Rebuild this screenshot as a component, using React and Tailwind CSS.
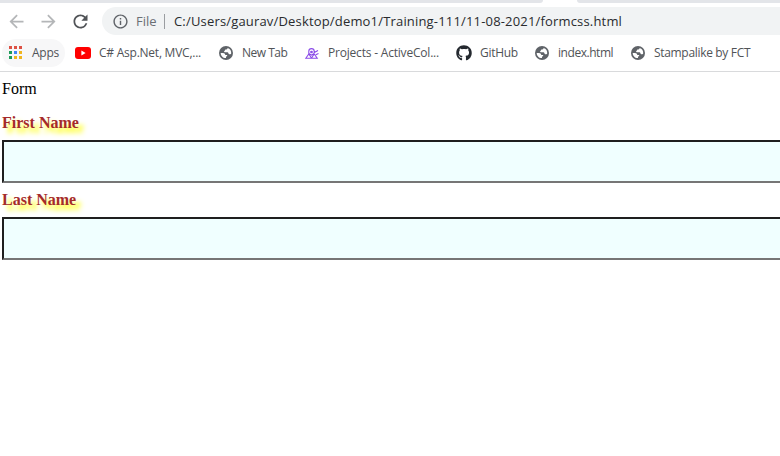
import { MdArrowBack, MdArrowForward, MdRefresh, MdInfoOutline } from "react-icons/md";
import { FaGithub } from "react-icons/fa";

function AppsIcon() {
  const colors = ["#dd5144", "#dd5144", "#dd5144", "#1e9c5a", "#4285f4", "#f0b51e", "#1e9c5a", "#f0b51e", "#f0b51e"];
  return (
    <svg className="mb-px" width="13" height="13" viewBox="0 0 13 13">
      {colors.map((c, i) => (
        <rect key={i} x={(i % 3) * 5} y={Math.floor(i / 3) * 5} width="3" height="3" fill={c} />
      ))}
    </svg>
  );
}

function YouTubeIcon() {
  return (
    <svg width="16" height="12" viewBox="0 0 16 12">
      <rect width="16" height="12" rx="3" fill="#f00" />
      <path d="M6.4 3.6v4.8l4.2-2.4z" fill="#fff" />
    </svg>
  );
}

function GlobeIcon() {
  return (
    <svg className="ml-px" width="14" height="14" viewBox="0 0 14 14">
      <circle cx="7" cy="7" r="7" fill="#5f6368" />
      <path
        d="M8.500 2c.2.800-.4 1.400-1.200 1.400h-.8c-.3 0-.5.300-.5.700 0 .7-.4 1.100-1 1.200-.2.600.2.900.8.900h2.300c.9 0 1.400.6 1.400 1.300 0 .4.300.7.7.7h1.100c.5 0 .7-.2.900-.6A5.400 5.400 0 0 0 8.500 2z"
        fill="#fff"
      />
      <path
        d="M1.700 6.900h2.300c1.400 0 2.200.8 2.300 2h1.300c.5 0 .8.400.6.900-.2.500-.6.800-1.200.9v1.200C4.200 12.200 1.700 10 1.700 6.900z"
        fill="#fff"
      />
    </svg>
  );
}

function ProjectsIcon() {
  return (
    <svg className="ml-px" width="14" height="11" viewBox="0 0 14 11" fill="none" stroke="#8a4be8" strokeWidth="1.1">
      <path d="M3.800 6.500V3.300a2.700 2.700 0 0 1 5.400 0v1.200L13 2.600M.8 10.200l3-4.200 2.700 4 2.700-4 3 4.200zM4 5.500l2.500 1.700L9 5.500M10.800 6.800l2.700-1.300" />
      <circle cx="6.500" cy="4" r=".8" fill="#8a4be8" />
    </svg>
  );
}

function Bookmark({ className, textClass, icon, children }) {
  return (
    <div className={`flex h-full shrink-0 items-center ${className}`}>
      <span className="flex w-6 shrink-0 items-center">{icon}</span>
      <span className={`whitespace-nowrap ${textClass}`}>{children}</span>
    </div>
  );
}

function Field({ label }) {
  return (
    <label className="block h-[77px]">
      <span className="block h-[27px] pt-px text-base leading-[18px] font-bold text-[#a52a2a] [text-shadow:5px_5px_5px_yellow]">
        {label}
      </span>
      <input className="block h-[43px] w-[800px] border-2 border-t-[#1f1f1f] border-r-[#767676] border-b-[#767676] border-l-[#1f1f1f] bg-[#f0ffff] outline-none" />
    </label>
  );
}

export default function App() {
  return (
    <div className="h-[456px] w-[780px] overflow-hidden bg-white">
      <header className="flex h-[72px] flex-col border-b border-[#d9dadc] font-['Open_Sans',sans-serif]">
        <div className="flex h-[3px] justify-between">
          <div className="w-[543px] rounded-br-[3px] bg-[#e3e5e9]" />
          <div className="w-[203px] rounded-bl-[3px] bg-[#e3e5e9]" />
        </div>
        <div className="flex h-9 items-center pl-[6px]">
          <MdArrowBack className="mr-[11px] size-[21px] text-[#b4b6b8]" />
          <MdArrowForward className="mr-[11px] size-[21px] text-[#b4b6b8]" />
          <MdRefresh className="mr-[11px] size-[21px] text-[#505357]" />
          <div className="flex h-7 flex-1 items-center rounded-l-full bg-[#f1f3f4] pl-[10px] text-sm">
            <MdInfoOutline className="mr-[7px] size-[17px] text-[#5f6368]" />
            <span className="w-[28px] text-[13px] text-[#6b6f74]">File</span>
            <span className="mr-[9px] h-[15px] w-px bg-[#9a9da1]" />
            <span className="text-[13px] tracking-[0.175px] whitespace-nowrap text-[#292b2e]">
              C:/Users/gaurav/Desktop/demo1/Training-111/11-08-2021/formcss.html
            </span>
          </div>
        </div>
        <nav className="flex h-7 items-center pl-[2px] text-[12px] text-[#505357]">
          <div className="mr-[10px] flex h-7 w-[63px] shrink-0 items-center rounded-full bg-[#f7f7f8] pl-[7px]">
            <span className="w-[23px]"><AppsIcon /></span>
            <span className="tracking-[-0.25px]">Apps</span>
          </div>
          <Bookmark className="w-[143px]" textClass="tracking-[-0.24px]" icon={<YouTubeIcon />}>C# Asp.Net, MVC,...</Bookmark>
          <Bookmark className="w-[86px]" textClass="tracking-[-0.5px]" icon={<GlobeIcon />}>New Tab</Bookmark>
          <Bookmark className="w-[152px]" textClass="tracking-[-0.2px]" icon={<ProjectsIcon />}>Projects - ActiveCol...</Bookmark>
          <Bookmark className="w-[78px]" textClass="tracking-[-0.3px]" icon={<FaGithub className="size-4 text-[#24292f]" />}>GitHub</Bookmark>
          <Bookmark className="w-[96px]" textClass="tracking-[-0.45px]" icon={<GlobeIcon />}>index.html</Bookmark>
          <Bookmark className="w-[130px]" textClass="tracking-[-0.32px]" icon={<GlobeIcon />}>Stampalike by FCT</Bookmark>
        </nav>
      </header>
      <main className="pt-[8px] pl-[2px] font-['Liberation_Serif',serif]">
        <p className="mb-[15px] text-base leading-[18px] text-black">Form</p>
        <Field label="First Name" />
        <Field label="Last Name" />
      </main>
    </div>
  );
}
